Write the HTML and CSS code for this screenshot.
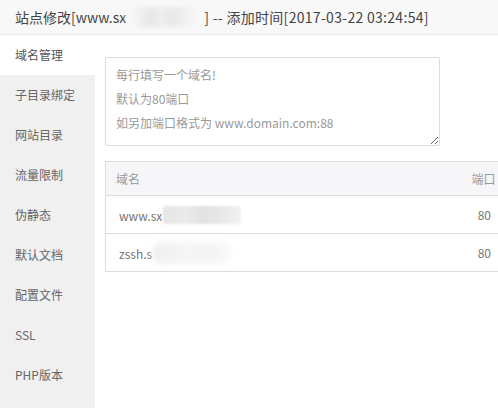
FILE: index.html
```html
<!DOCTYPE html>
<html lang="zh-CN">
<head>
<meta charset="utf-8">
<title>站点修改</title>
<link rel="stylesheet" href="styles.css">
</head>
<body>
<div class="header">
  <span>站点修改[www.sx</span><span class="blur blur-title"></span><span class="title-rest">] -- 添加时间[2017-03-22 03:24:54]</span>
</div>
<div class="main">
  <ul class="side">
    <li class="active">域名管理</li>
    <li>子目录绑定</li>
    <li>网站目录</li>
    <li>流量限制</li>
    <li>伪静态</li>
    <li>默认文档</li>
    <li>配置文件</li>
    <li>SSL</li>
    <li>PHP版本</li>
  </ul>
  <div class="content">
    <textarea class="domains" placeholder="每行填写一个域名!&#10;默认为80端口&#10;如另加端口格式为 www.domain.com:88"></textarea>
    <table class="tbl">
      <thead>
        <tr><th>域名</th><th class="port">端口</th></tr>
      </thead>
      <tbody>
        <tr><td><span class="dom">www.sx</span><span class="blur blur-row"></span></td><td class="port">80</td></tr>
        <tr><td><span class="dom">zssh.s</span><span class="blur blur-row2"></span></td><td class="port">80</td></tr>
      </tbody>
    </table>
  </div>
</div>
</body>
</html>
```
FILE: styles.css
```css
* { box-sizing: border-box; }
html, body {
  margin: 0;
  padding: 0;
  background: #fff;
  font-family: "Microsoft YaHei", "Noto Sans CJK SC", "Noto Sans", sans-serif;
  width: 498px;
  height: 408px;
  overflow: hidden;
}
.header {
  height: 35px;
  background: #f8f8f8;
  border-bottom: 1px solid #eaeaea;
  padding-left: 15px;
  font-size: 14px;
  color: #444;
  line-height: 34px;
  white-space: nowrap;
  display: flex;
  align-items: center;
}
.title-rest { letter-spacing: 0.3px; }
.blur {
  display: inline-block;
  border-radius: 10px;
  filter: blur(2px);
}
.blur-title {
  width: 77px;
  height: 20px;
  margin: 0 1px 0 0;
  background: linear-gradient(90deg, #fbfbfb 0%, #f0f0f0 20%, #e6e6e6 30%, #eeeeee 45%, #e8e8e8 60%, #f2f2f2 80%, #fbfbfb 100%);
}
.main {
  display: flex;
  height: 373px;
}
.side {
  list-style: none;
  margin: 0;
  padding: 0;
  width: 95px;
  background: #f0f0f0;
  flex-shrink: 0;
}
.side li {
  height: 40px;
  line-height: 40px;
  padding-left: 15px;
  font-size: 12px;
  color: #666;
}
.side li.active {
  background: #fff;
  color: #555;
}
.content {
  flex: 1;
  padding: 22px 0 0 10px;
  min-width: 0;
}
.domains {
  display: block;
  width: 335px;
  height: 89px;
  border: 1px solid #ddd;
  border-radius: 2px;
  padding: 5px 10px;
  font-family: inherit;
  font-size: 12px;
  line-height: 24px;
  color: #666;
  resize: both;
  margin: 0;
}
.domains::placeholder { color: #999; }
.tbl {
  margin-top: 15px;
  width: 400px;
  border-collapse: collapse;
  font-size: 12px;
  border: 1px solid #ddd;
}
.tbl th {
  background: #f6f6f8;
  height: 34px;
  font-weight: normal;
  color: #999;
  text-align: left;
  padding: 0 10px;
  border-bottom: 1px solid #ddd;
}
.tbl th.port { text-align: left; padding: 0; width: 33px; }
.tbl td {
  height: 38px;
  color: #777;
  padding: 0 0 0 13px;
  border-bottom: 1px solid #ddd;
  vertical-align: middle;
  white-space: nowrap;
}
.tbl td.port { text-align: right; padding: 0 13px 0 0; }
.dom { vertical-align: middle; }
.blur-row {
  width: 78px;
  height: 18px;
  vertical-align: middle;
  margin-left: 1px;
  border-radius: 3px;
  filter: blur(1px);
  background: linear-gradient(90deg, #e6e6e6 0%, #ebebeb 30%, #e2e2e2 50%, #e8e8e8 75%, #f2f2f2 100%);
}
.blur-row2 {
  width: 80px;
  height: 22px;
  vertical-align: middle;
  border-radius: 11px;
  filter: blur(3px);
  background: linear-gradient(90deg, #eeeeee 0%, #f6f6f6 40%, #f3f3f3 70%, #fafafa 100%);
}
```
